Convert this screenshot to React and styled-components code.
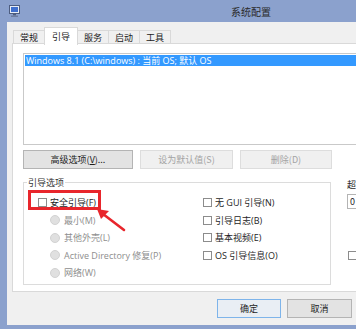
import React from 'react';
import styled, { createGlobalStyle } from 'styled-components';

const GlobalStyle = createGlobalStyle`
  html, body {
    margin: 0;
    padding: 0;
    background: #ffffff;
  }
  body {
    font-family: "Open Sans", "Noto Sans CJK SC", sans-serif;
  }
`;

// Window frame

const Window = styled.div`
  position: relative;
  width: 356px;
  height: 329px;
  overflow: hidden;
  background: #8ba1cd;
`;

const TitleBar = styled.div`
  height: 22px;
  display: flex;
  align-items: center;
  padding-left: 9px;
`;

const Title = styled.span`
  margin-left: 211px;
  font-size: 10px;
  color: #2a2a2a;
  font-family: "Noto Sans CJK SC", sans-serif;
`;

const Body = styled.div`
  margin-left: 7px;
  height: 303px;
  background: #f0f0f0;
  padding: 4px 0 0 5px;
  box-sizing: border-box;
  display: flex;
  flex-direction: column;
`;

// Tabs

const TabStrip = styled.div`
  display: flex;
  align-items: flex-end;
  height: 18px;
  padding-left: 1px;
  position: relative;
  z-index: 1;
`;

const Tab = styled.div`
  height: ${({ $active }) => ($active ? '18px' : '14px')};
  padding: 0 ${({ $active }) => ($active ? '7px' : '6px')};
  margin-right: -1px;
  margin-bottom: ${({ $active }) => ($active ? '-1px' : '0')};
  border: 1px solid #d9d9d9;
  border-bottom: ${({ $active }) => ($active ? 'none' : '1px solid #d9d9d9')};
  background: ${({ $active }) => ($active ? '#ffffff' : '#f0f0f0')};
  box-sizing: border-box;
  display: flex;
  align-items: center;
  font-size: 9px;
  color: #222;
  font-family: "Noto Sans CJK SC", sans-serif;
  position: relative;
  z-index: ${({ $active }) => ($active ? 2 : 1)};
`;

const Panel = styled.div`
  width: 400px;
  height: 249px;
  margin-top: -1px;
  border: 1px solid #d9d9d9;
  border-right: none;
  background: #ffffff;
  box-sizing: border-box;
  padding: 9px 0 0 10px;
  display: flex;
  flex-direction: column;
`;

// Boot list

const ListBox = styled.div`
  width: 400px;
  height: 92px;
  border: 1px solid #c9c9c9;
  padding: 1px;
  box-sizing: border-box;
`;

const ListRow = styled.div`
  height: 11px;
  line-height: 11px;
  padding-left: 1px;
  background: #3399ff;
  color: #ffffff;
  font-size: 9px;
  white-space: nowrap;
`;

// Buttons

const ButtonRow = styled.div`
  display: flex;
  gap: 7px;
  margin-top: 5px;
`;

const Button = styled.div`
  width: ${({ $w }) => $w}px;
  height: 19px;
  box-sizing: border-box;
  display: flex;
  align-items: center;
  justify-content: center;
  font-size: 9px;
  font-family: "Noto Sans CJK SC", sans-serif;
  border: 1px solid ${({ $disabled, $focus }) =>
    $focus ? '#7eb4ea' : $disabled ? '#dddddd' : '#b4b4b4'};
  background: ${({ $disabled, $focus }) =>
    $focus ? '#e9eef4' : $disabled ? '#f0f0f0' : '#e3e3e3'};
  color: ${({ $disabled }) => ($disabled ? '#a3a3a3' : '#1e1e1e')};
  text-decoration: none;

  & u {
    text-decoration: underline;
  }
`;

// Boot options group

const GroupRow = styled.div`
  display: flex;
  gap: 16px;
  margin-top: 13px;
`;

const GroupBox = styled.div`
  position: relative;
  width: 308px;
  height: 103px;
  border: 1px solid #dcdcdc;
  box-sizing: border-box;
  padding: 11px 0 0 14px;
  display: flex;
`;

const Legend = styled.span`
  position: absolute;
  top: -7px;
  left: 3px;
  padding: 0 1px;
  background: #ffffff;
  font-size: 9px;
  color: #333;
  font-family: "Noto Sans CJK SC", sans-serif;
`;

const Column = styled.div`
  width: ${({ $w }) => ($w ? `${$w}px` : 'auto')};
  display: flex;
  flex-direction: column;
`;

const OptionRow = styled.div`
  height: 17.5px;
  display: flex;
  align-items: center;
  gap: 3px;
  padding-left: ${({ $indent }) => ($indent ? 12 : 0)}px;
  font-size: 9px;
  white-space: nowrap;
  font-family: "Open Sans", "Noto Sans CJK SC", sans-serif;
  color: ${({ $disabled }) => ($disabled ? '#8e8e8e' : '#1e1e1e')};
`;

const CheckBox = styled.span`
  width: 9px;
  height: 9px;
  border: 1px solid #8c8c8c;
  background: #ffffff;
  box-sizing: border-box;
  flex-shrink: 0;
`;

const Radio = styled.span`
  width: 10px;
  height: 10px;
  border-radius: 50%;
  border: 1px solid #d2d2d2;
  background: #e0e0e0;
  box-sizing: border-box;
  flex-shrink: 0;
  margin-right: 1px;
`;

const SideColumn = styled.div`
  display: flex;
  flex-direction: column;
  margin-top: -4px;
  width: 60px;
  font-size: 9px;
  color: #1e1e1e;
  font-family: "Noto Sans CJK SC", sans-serif;
`;

const TimeoutInput = styled.div`
  margin-top: 3px;
  width: 60px;
  height: 15px;
  border: 1px solid #b4b4b4;
  box-sizing: border-box;
  padding-left: 2px;
  display: flex;
  align-items: center;
  background: #ffffff;
`;

const SideCheck = styled(CheckBox)`
  margin: 42px 0 0 1px;
`;

const FooterButtons = styled.div`
  display: flex;
  gap: 6px;
  margin-top: 7px;
  padding-left: 205px;
`;

// Annotations laid over the dialog

const Highlight = styled.div`
  position: absolute;
  left: 28px;
  top: 190px;
  width: 73px;
  height: 20px;
  border: 3px solid #e8262c;
  box-sizing: border-box;
  pointer-events: none;
`;

const ArrowSvg = styled.svg`
  position: absolute;
  left: 94px;
  top: 206px;
  pointer-events: none;
`;

const MonitorIcon = () => (
  <svg width="11" height="12" viewBox="0 0 11 12">
    <rect x="0.5" y="0.5" width="10" height="8" fill="#e6ecf6" stroke="#4d5d80" />
    <rect x="2" y="2" width="7" height="5" fill="#3f6fce" />
    <rect x="4" y="9" width="3" height="1.5" fill="#4d5d80" />
    <rect x="2" y="10.5" width="7" height="1.5" fill="#6d7da0" />
  </svg>
);

const tabs = ['常规', '引导', '服务', '启动', '工具'];

const radios = [
  '最小(M)',
  '其他外壳(L)',
  'Active Directory 修复(P)',
  '网络(W)',
];

const checks = ['无 GUI 引导(N)', '引导日志(B)', '基本视频(E)', 'OS 引导信息(O)'];

export default function App() {
  return (
    <>
      <GlobalStyle />
      <Window>
        <TitleBar>
          <MonitorIcon />
          <Title>系统配置</Title>
        </TitleBar>
        <Body>
          <TabStrip>
            {tabs.map((t) => (
              <Tab key={t} $active={t === '引导'}>
                {t}
              </Tab>
            ))}
          </TabStrip>
          <Panel>
            <ListBox>
              <ListRow>Windows 8.1 (C:\windows) : 当前 OS; 默认 OS</ListRow>
            </ListBox>
            <ButtonRow>
              <Button $w={110}>
                高级选项(<u>V</u>)...
              </Button>
              <Button $w={93} $disabled>
                设为默认值(S)
              </Button>
              <Button $w={92} $disabled>
                删除(D)
              </Button>
            </ButtonRow>
            <GroupRow>
              <GroupBox>
                <Legend>引导选项</Legend>
                <Column $w={165}>
                  <OptionRow>
                    <CheckBox />
                    安全引导(F)
                  </OptionRow>
                  {radios.map((r) => (
                    <OptionRow key={r} $indent $disabled>
                      <Radio />
                      {r}
                    </OptionRow>
                  ))}
                </Column>
                <Column>
                  {checks.map((c) => (
                    <OptionRow key={c}>
                      <CheckBox />
                      {c}
                    </OptionRow>
                  ))}
                </Column>
              </GroupBox>
              <SideColumn>
                <span>超时(T):</span>
                <TimeoutInput>0</TimeoutInput>
                <SideCheck />
              </SideColumn>
            </GroupRow>
          </Panel>
          <FooterButtons>
            <Button $w={64} $focus>
              确定
            </Button>
            <Button $w={65}>取消</Button>
          </FooterButtons>
        </Body>
        <Highlight />
        <ArrowSvg width="34" height="28" viewBox="0 0 34 28">
          <line x1="30" y1="24" x2="9" y2="8" stroke="#e8262c" strokeWidth="2.6" strokeLinecap="round" />
          <polygon points="3,3 15,5 7,13" fill="#e8262c" />
        </ArrowSvg>
      </Window>
    </>
  );
}
